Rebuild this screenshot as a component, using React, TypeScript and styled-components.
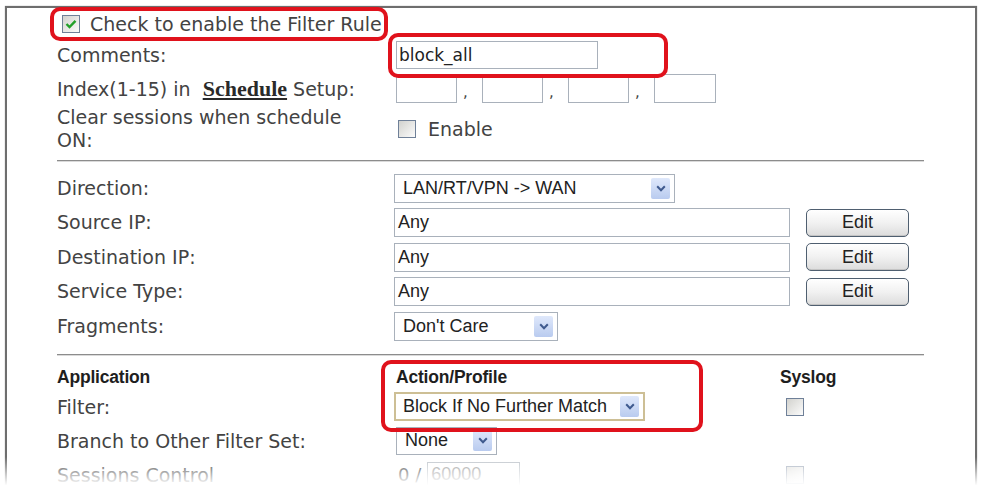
import React from 'react';
import styled, { createGlobalStyle } from 'styled-components';

const GlobalStyle = createGlobalStyle`
  html, body {
    margin: 0;
    padding: 0;
    background: #fff;
  }
  body {
    font-family: "DejaVu Sans", Verdana, sans-serif;
    color: #434343;
    overflow: hidden;
  }
`;

const Page = styled.div`
  position: relative;
  height: 487px;
  overflow: hidden;
  padding: 6px 4px 0 5px;
  box-sizing: border-box;
`;

const Frame = styled.div`
  border: 2px solid #6e6e6e;
  border-bottom: none;
  box-shadow: 0 0 1px #9a9a9a;
  height: 560px;
  padding: 1px 51px 0 50px;
`;

const Fade = styled.div`
  position: absolute;
  left: 0;
  right: 0;
  bottom: 0;
  height: 30px;
  background: linear-gradient(to bottom, rgba(255, 255, 255, 0) 0%, rgba(255, 255, 255, 0.6) 55%, #fff 95%);
  pointer-events: none;
`;

const Highlight = styled.span<{ $top: number; $right: number; $bottom: number; $left: number }>`
  position: relative;
  display: inline-flex;
  align-items: center;
  &::after {
    content: '';
    position: absolute;
    top: ${(p) => p.$top}px;
    right: ${(p) => p.$right}px;
    bottom: ${(p) => p.$bottom}px;
    left: ${(p) => p.$left}px;
    border: 4.5px solid #e0121c;
    border-radius: 10px;
    pointer-events: none;
  }
`;

const EnableRow = styled.div`
  height: 30px;
  display: flex;
  align-items: center;
  padding-left: 5px;
`;

const EnableText = styled.span`
  font-size: 19px;
  margin-left: 10px;
  line-height: 22px;
`;

const Row = styled.div<{ $h: number }>`
  height: ${(p) => p.$h}px;
  display: flex;
  align-items: center;
`;

const Label = styled.div`
  width: 337px;
  flex: none;
  font-size: 19px;
  line-height: 23px;
  padding-right: 24px;
  box-sizing: border-box;
`;

const Control = styled.div`
  display: flex;
  align-items: center;
  flex: 1;
`;

const ScheduleLink = styled.a`
  font-family: "Liberation Serif", "Times New Roman", serif;
  font-weight: bold;
  font-size: 22px;
  color: #2a2a2a;
  text-decoration: underline;
`;

const Box = styled.div<{ $w: number; $h?: number; $indent?: number }>`
  width: ${(p) => p.$w}px;
  height: ${(p) => p.$h ?? 29}px;
  margin-left: ${(p) => p.$indent ?? 0}px;
  box-sizing: border-box;
  border: 1px solid #a9b1bb;
  background: #fff;
  display: flex;
  align-items: center;
  padding: 0 3px;
  font-family: "Liberation Sans", Arial, sans-serif;
  font-size: 18px;
  color: #222;
  white-space: nowrap;
`;

const CommentBox = styled(Box)`
  font-family: "DejaVu Sans", Verdana, sans-serif;
  font-size: 17px;
  padding-left: 2px;
`;

const Comma = styled.span`
  width: 25px;
  padding-left: 6px;
  box-sizing: border-box;
  font-size: 15px;
  align-self: flex-end;
  margin-bottom: 2px;
`;

const Checkbox = styled.span<{ $dim?: boolean }>`
  width: 18px;
  height: 18px;
  box-sizing: border-box;
  flex: none;
  border: 1px solid #6f8098;
  background: linear-gradient(135deg, #d2d2ce 0%, #e9e9e7 55%, #fbfbfb 100%);
  display: inline-flex;
  align-items: center;
  justify-content: center;
  opacity: ${(p) => (p.$dim ? 0.6 : 1)};
`;

const CheckMark = () => (
  <svg width="12" height="10" viewBox="0 0 12 10">
    <path d="M1.5 5 L4.5 8 L10.5 1.8" stroke="#22a02a" strokeWidth="2.4" fill="none" />
  </svg>
);

const CheckText = styled.span`
  font-size: 19px;
  margin-left: 12px;
`;

const Select = styled.div<{ $w: number; $tan?: boolean; $h?: number }>`
  width: ${(p) => p.$w}px;
  height: ${(p) => p.$h ?? 29}px;
  box-sizing: border-box;
  border: ${(p) => (p.$tan ? '2px solid #cdbf95' : '1px solid #a9b1bb')};
  background: #fff;
  display: flex;
  align-items: center;
  justify-content: space-between;
  padding-left: ${(p) => (p.$tan ? 7 : 8)}px;
  padding-right: 4px;
  font-family: "Liberation Sans", Arial, sans-serif;
  font-size: 18px;
  color: #222;
  white-space: nowrap;
`;

const ArrowBox = styled.span`
  width: 19px;
  height: 21px;
  flex: none;
  border-radius: 2px;
  background: linear-gradient(to bottom, #dfe8fb, #b9cbef);
  display: inline-flex;
  align-items: center;
  justify-content: center;
`;

const Arrow = () => (
  <ArrowBox>
    <svg width="10" height="7" viewBox="0 0 10 7">
      <path d="M1.2 1.2 L5 5.2 L8.8 1.2" stroke="#3f5a8e" strokeWidth="2" fill="none" />
    </svg>
  </ArrowBox>
);

const EditButton = styled.div`
  width: 103px;
  height: 28px;
  margin-left: 16px;
  box-sizing: border-box;
  border: 1px solid #4f5f70;
  border-radius: 5px;
  background: linear-gradient(to bottom, #ffffff 0%, #f1f1f1 50%, #dcdcdc 100%);
  box-shadow: inset 0 -1px 0 #c4c4c4;
  display: flex;
  align-items: center;
  justify-content: center;
  font-family: "Liberation Sans", Arial, sans-serif;
  font-size: 18px;
  color: #222;
`;

const Divider = styled.div<{ $above: number; $below: number }>`
  margin: ${(p) => p.$above}px 0 ${(p) => p.$below}px;
  border-top: 1px solid #8c8c8c;
  border-bottom: 1px solid #dadada;
`;

const AppGrid = styled.div`
  display: grid;
  grid-template-columns: 337px 386px auto;
  grid-template-rows: 24px 34px 34px 34px;
  align-items: center;
`;

const GridLabel = styled.div<{ $row: number }>`
  grid-column: 1;
  grid-row: ${(p) => p.$row};
  font-size: 19px;
`;

const Head = styled.div`
  font-family: "Liberation Sans", Arial, sans-serif;
  font-weight: bold;
  font-size: 17.5px;
  color: #1e1e1e;
  letter-spacing: -0.2px;
`;

const AppHead = styled(Head)`
  grid-column: 1;
  grid-row: 1;
`;

const SyslogHead = styled(Head)`
  grid-column: 3;
  grid-row: 1;
`;

const ActionCell = styled(Highlight)`
  grid-column: 2;
  grid-row: 1 / 3;
  align-self: stretch;
  display: grid;
  grid-template-rows: 24px 34px;
  align-items: center;
`;

const ActionHead = styled(Head)`
  padding-left: 2px;
`;

const Cell = styled.div<{ $col: number; $row: number; $indent?: number }>`
  grid-column: ${(p) => p.$col};
  grid-row: ${(p) => p.$row};
  display: flex;
  align-items: center;
  padding-left: ${(p) => p.$indent ?? 0}px;
`;

const Ratio = styled.span`
  font-size: 18px;
  margin: 0 6px 0 2px;
`;

const DimBox = styled(Box)`
  color: #9a9a9a;
  border-color: #c0c6cc;
`;

export default function App() {
  return (
    <>
      <GlobalStyle />
      <Page>
        <Frame>
          <EnableRow>
            <Highlight $top={-6} $right={-6} $bottom={-6} $left={-12}>
              <Checkbox>
                <CheckMark />
              </Checkbox>
              <EnableText>Check to enable the Filter Rule</EnableText>
            </Highlight>
          </EnableRow>

          <Row $h={32}>
            <Label>Comments:</Label>
            <Control>
              <Highlight $top={-8} $right={-70} $bottom={-9} $left={-6}>
                <CommentBox $w={202} $h={28} $indent={2}>block_all</CommentBox>
              </Highlight>
            </Control>
          </Row>

          <Row $h={35}>
            <Label>
              Index(1-15) in&nbsp; <ScheduleLink>Schedule</ScheduleLink> Setup:
            </Label>
            <Control>
              <Box $w={61} $indent={2} />
              <Comma>,</Comma>
              <Box $w={61} />
              <Comma>,</Comma>
              <Box $w={61} />
              <Comma>,</Comma>
              <Box $w={62} />
            </Control>
          </Row>

          <Row $h={46}>
            <Label>Clear sessions when schedule ON:</Label>
            <Control>
              <Checkbox style={{ marginLeft: 4 }} />
              <CheckText>Enable</CheckText>
            </Control>
          </Row>

          <Divider $above={8} $below={9} />

          <Row $h={34.5}>
            <Label>Direction:</Label>
            <Control>
              <Select $w={281}>
                LAN/RT/VPN -&gt; WAN
                <Arrow />
              </Select>
            </Control>
          </Row>
          <Row $h={34.5}>
            <Label>Source IP:</Label>
            <Control>
              <Box $w={396}>Any</Box>
              <EditButton>Edit</EditButton>
            </Control>
          </Row>
          <Row $h={34.5}>
            <Label>Destination IP:</Label>
            <Control>
              <Box $w={396}>Any</Box>
              <EditButton>Edit</EditButton>
            </Control>
          </Row>
          <Row $h={34.5}>
            <Label>Service Type:</Label>
            <Control>
              <Box $w={396}>Any</Box>
              <EditButton>Edit</EditButton>
            </Control>
          </Row>
          <Row $h={34.5}>
            <Label>Fragments:</Label>
            <Control>
              <Select $w={164}>
                Don't Care
                <Arrow />
              </Select>
            </Control>
          </Row>

          <Divider $above={10} $below={10} />

          <AppGrid>
            <AppHead>Application</AppHead>
            <ActionCell $top={-6} $right={77} $bottom={-8} $left={-13}>
              <ActionHead>Action/Profile</ActionHead>
              <Select $w={251} $tan>
                Block If No Further Match
                <Arrow />
              </Select>
            </ActionCell>
            <SyslogHead>Syslog</SyslogHead>

            <GridLabel $row={2}>Filter:</GridLabel>
            <Cell $col={3} $row={2} $indent={6}>
              <Checkbox />
            </Cell>

            <GridLabel $row={3}>Branch to Other Filter Set:</GridLabel>
            <Cell $col={2} $row={3} $indent={2}>
              <Select $w={101} $h={28}>
                None
                <Arrow />
              </Select>
            </Cell>

            <GridLabel $row={4}>Sessions Control</GridLabel>
            <Cell $col={2} $row={4} $indent={2}>
              <Ratio>0 /</Ratio>
              <DimBox $w={93} $h={26}>60000</DimBox>
            </Cell>
            <Cell $col={3} $row={4} $indent={6}>
              <Checkbox $dim />
            </Cell>
          </AppGrid>
        </Frame>
        <Fade />
      </Page>
    </>
  );
}
